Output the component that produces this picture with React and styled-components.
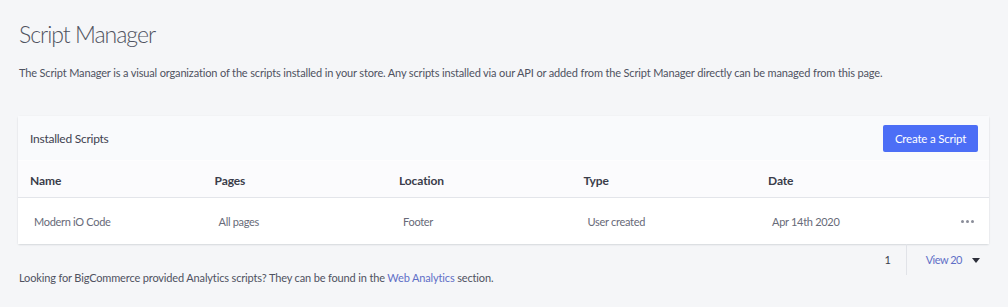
import React from "react";
import styled, { createGlobalStyle } from "styled-components";

const Global = createGlobalStyle`
  html, body { margin: 0; padding: 0; background: #f5f6f8; }
  body { font-family: Lato, "Open Sans", sans-serif; color: #313440; letter-spacing: -0.15px; }
  * { box-sizing: border-box; }
`;

const Page = styled.div`
  width: 1008px;
  height: 307px;
  padding: 18px 19px 0 19px;
  background: #f5f6f8;
  overflow: hidden;
`;

const Title = styled.h1`
  margin: 0;
  font-size: 23px;
  font-weight: 300;
  line-height: 32px;
  letter-spacing: -1px;
  color: #50535f;
`;

const Desc = styled.p`
  margin: 15px 0 0 0;
  font-size: 11px;
  line-height: 16px;
  color: #4f5261;
`;

const Card = styled.section`
  margin: 35px 0 0 -1px;
  width: 971px;
  background: #fff;
  box-shadow: 0 1px 2px rgba(30, 40, 60, 0.14), 0 0 1px rgba(30, 40, 60, 0.08);
  border-radius: 2px;
`;

const CardHeader = styled.div`
  height: 45px;
  padding: 0 11px 0 12px;
  display: flex;
  align-items: center;
  justify-content: space-between;
  background: #f9fafc;
  border-bottom: 1px solid #fdfdfe;
`;

const CardTitle = styled.h2`
  margin: 0;
  font-size: 12px;
  font-weight: 400;
  letter-spacing: -0.25px;
  color: #3f4250;
`;

const Button = styled.button`
  width: 95px;
  height: 27px;
  border: none;
  border-radius: 2px;
  background: #4c6ef6;
  color: #fff;
  font-family: inherit;
  font-size: 11.5px;
  letter-spacing: -0.2px;
  cursor: pointer;
`;

const Row = styled.div`
  display: grid;
  grid-template-columns: repeat(5, 184.5px) 1fr;
  align-items: center;
  height: ${(p) => p.$h}px;
  padding-left: ${(p) => p.$pl}px;
  padding-top: ${(p) => p.$pt || 0}px;
  background: ${(p) => p.$bg};
  border-bottom: ${(p) => (p.$border ? "1px solid #e3e5ea" : "none")};
`;

const HeadCell = styled.div`
  font-size: 12px;
  font-weight: 700;
  letter-spacing: -0.1px;
  color: #3a3d4a;
`;

const Cell = styled.div`
  font-size: 11px;
  letter-spacing: -0.3px;
  color: #676a78;
`;

const Dots = styled.div`
  justify-self: end;
  margin-right: 15px;
  display: flex;
  gap: 2px;
  span {
    width: 3px;
    height: 3px;
    border-radius: 50%;
    background: #8a8d99;
  }
`;

const Pager = styled.div`
  width: 971px;
  margin-left: -1px;
  height: 26px;
  display: flex;
  justify-content: flex-end;
  align-items: flex-start;
`;

const PageNum = styled.span`
  margin-top: 8px;
  font-size: 11px;
  line-height: 16px;
  color: #3a3d4a;
  padding-right: 15px;
`;

const Divider = styled.div`
  width: 1px;
  height: 31px;
  flex-shrink: 0;
  background: #e1e3e8;
`;

const ViewSelect = styled.div`
  margin-top: 8px;
  display: flex;
  align-items: center;
  gap: 10px;
  padding: 0 9px 0 19px;
  font-size: 11px;
  line-height: 16px;
  letter-spacing: -0.5px;
  color: #5f6fc7;
`;

const Caret = styled.span`
  width: 0;
  height: 0;
  border-left: 4px solid transparent;
  border-right: 4px solid transparent;
  border-top: 5px solid #2c2f3a;
`;

const Footer = styled.p`
  margin: 0;
  font-size: 11px;
  line-height: 16px;
  color: #4f5261;
  a { color: #5f6fc7; text-decoration: none; }
`;

const cols = ["Name", "Pages", "Location", "Type", "Date"];
const data = ["Modern iO Code", "All pages", "Footer", "User created", "Apr 14th 2020"];

export default function App() {
  return (
    <Page>
      <Global />
      <Title>Script Manager</Title>
      <Desc>
        The Script Manager is a visual organization of the scripts installed in your store. Any scripts installed via our API or added from the Script Manager directly can be managed from this page.
      </Desc>
      <Card>
        <CardHeader>
          <CardTitle>Installed Scripts</CardTitle>
          <Button>Create a Script</Button>
        </CardHeader>
        <Row $h={37} $pl={12} $pt={2} $bg="#fbfbfd" $border>
          {cols.map((c) => (
            <HeadCell key={c}>{c}</HeadCell>
          ))}
          <div />
        </Row>
        <Row $h={46} $pl={16} $bg="#fff">
          {data.map((d) => (
            <Cell key={d}>{d}</Cell>
          ))}
          <Dots>
            <span />
            <span />
            <span />
          </Dots>
        </Row>
      </Card>
      <Pager>
        <PageNum>1</PageNum>
        <Divider />
        <ViewSelect>
          View 20 <Caret />
        </ViewSelect>
      </Pager>
      <Footer>
        Looking for BigCommerce provided Analytics scripts? They can be found in the <a href="#">Web Analytics</a> section.
      </Footer>
    </Page>
  );
}
